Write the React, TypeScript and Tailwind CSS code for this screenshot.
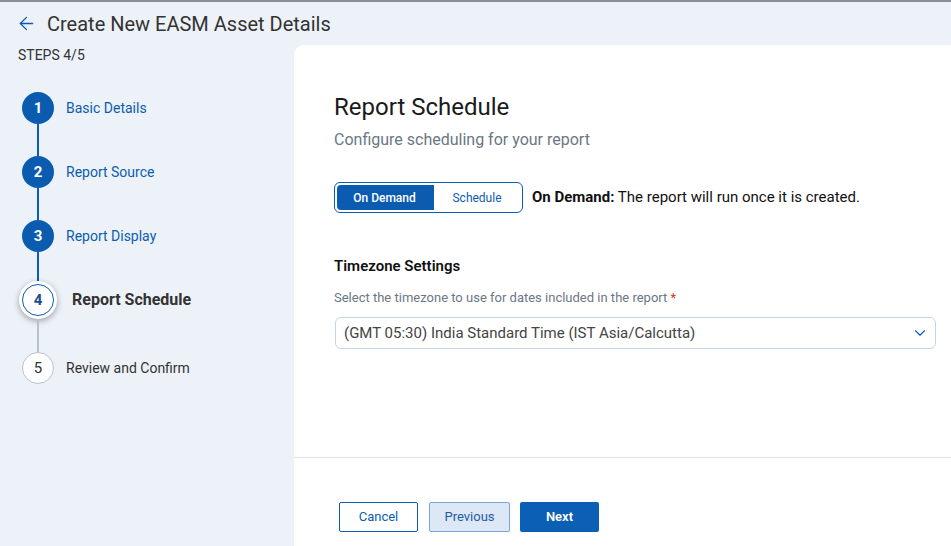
import { ArrowLeft, ChevronDown } from "lucide-react";

type Step = { n: number; label: string; state: "done" | "active" | "todo" };

const steps: Step[] = [
  { n: 1, label: "Basic Details", state: "done" },
  { n: 2, label: "Report Source", state: "done" },
  { n: 3, label: "Report Display", state: "done" },
  { n: 4, label: "Report Schedule", state: "active" },
  { n: 5, label: "Review and Confirm", state: "todo" },
];

function StepCircle({ step }: { step: Step }) {
  if (step.state === "active") {
    return (
      <div className="w-[38px] h-[38px] rounded-full bg-white shadow-[0_2px_6px_rgba(0,0,0,0.35)] flex items-center justify-center">
        <div className="w-[32px] h-[32px] rounded-full border border-[#0b5cb0] flex items-center justify-center text-[15px] font-bold text-[#1b4f8c]">
          {step.n}
        </div>
      </div>
    );
  }
  if (step.state === "done") {
    return (
      <div className="w-[32px] h-[32px] rounded-full bg-[#0b5cb0] flex items-center justify-center text-[15px] font-bold text-white">
        {step.n}
      </div>
    );
  }
  return (
    <div className="w-[32px] h-[32px] rounded-full bg-white border border-[#b8c2cc] flex items-center justify-center text-[15px] text-[#333]">
      {step.n}
    </div>
  );
}

function Stepper() {
  const lineHeights = [32, 32, 29, 33];
  return (
    <div className="flex flex-col mt-[29px]">
      {steps.map((s, i) => (
        <div key={s.n}>
          <div className={s.state === "active" ? "flex items-center h-[38px]" : "flex items-center h-[32px]"}>
            <div className="w-[76px] flex justify-center">
              <StepCircle step={s} />
            </div>
            {s.state === "active" ? (
              <span className="text-[16px] font-bold text-[#333] ml-[-4px]">{s.label}</span>
            ) : (
              <span
                className={
                  s.state === "done"
                    ? "text-[14px] text-[#0b5cb0] ml-[-10px]"
                    : "text-[14px] text-[#333] ml-[-10px]"
                }
              >
                {s.label}
              </span>
            )}
          </div>
          {i < steps.length - 1 && (
            <div className="w-[76px] flex justify-center">
              <div
                className={i < 3 ? "w-[2px] bg-[#0b5cb0]" : "w-[2px] bg-[#b8c2cc]"}
                style={{ height: lineHeights[i] }}
              />
            </div>
          )}
        </div>
      ))}
    </div>
  );
}

export default function App() {
  return (
    <div
      className="h-[546px] w-[951px] overflow-hidden flex flex-col bg-[#edf2f9] border-t-2 border-[#8d9196]"
      style={{ fontFamily: "Roboto, 'Liberation Sans', sans-serif" }}
    >
      {/* header */}
      <div className="h-[43px] flex items-center pl-[16px] gap-[10px]">
        <ArrowLeft className="w-[21px] h-[21px] text-[#0b5cb0]" strokeWidth={1.5} />
        <h1 className="text-[20px] text-[#333]">Create New EASM Asset Details</h1>
      </div>

      <div className="flex flex-1 min-h-0">
        {/* sidebar */}
        <div className="w-[294px] shrink-0">
          <div className="pl-[18px] pt-[2px] text-[14px] text-[#333] leading-[16px]">STEPS 4/5</div>
          <Stepper />
        </div>

        {/* main panel */}
        <div className="flex-1 bg-white rounded-tl-[10px] flex flex-col">
          <div className="h-[413px] border-b border-[#e1e5ea] pl-[40px] pr-[15px] pt-[48px]">
            <h2 className="text-[24px] text-[#1a1a1a] leading-[28px]">Report Schedule</h2>
            <p className="text-[16px] text-[#6b7785] mt-[9px] leading-[19px]">
              Configure scheduling for your report
            </p>

            <div className="flex items-center mt-[33px]">
              <div className="flex h-[31px] w-[189px] border border-[#0b5cb0] rounded-[6px] p-[2px]">
                <button className="w-[96px] bg-[#0b5cb0] text-white text-[12px] font-medium rounded-l-[4px] border-r border-[#0b5cb0]">
                  On Demand
                </button>
                <button className="flex-1 text-[#0b5cb0] text-[12px] border-l border-[#0b5cb0]">
                  Schedule
                </button>
              </div>
              <p className="ml-[9px] text-[15px] text-[#111]">
                <span className="font-bold">On Demand:</span> The report will run once it is created.
              </p>
            </div>

            <h3 className="mt-[44px] text-[15px] font-semibold text-[#111] leading-[18px]">
              Timezone Settings
            </h3>
            <p className="mt-[15px] text-[13px] text-[#6b7785] leading-[15px]">
              Select the timezone to use for dates included in the report{" "}
              <span className="text-[#d93025]">*</span>
            </p>
            <div className="mt-[12px] ml-[1px] h-[32px] border border-[#c4d6ec] rounded-[6px] flex items-center justify-between pl-[8px] pr-[6px]">
              <span className="text-[15px] text-[#444]">
                (GMT 05:30) India Standard Time (IST Asia/Calcutta)
              </span>
              <ChevronDown className="w-[18px] h-[18px] text-[#0b5cb0]" strokeWidth={1.5} />
            </div>
          </div>

          {/* footer */}
          <div className="flex items-start gap-[10px] pl-[45px] pt-[44px]">
            <button className="w-[79px] h-[30px] border border-[#0b5cb0] rounded-[2px] bg-white text-[13px] text-[#0b5cb0]">
              Cancel
            </button>
            <button className="ml-[1px] w-[81px] h-[30px] border border-[#7aa5d6] rounded-[2px] bg-[#dce8f5] text-[13px] text-[#1f5aa6]">
              Previous
            </button>
            <button className="w-[79px] h-[30px] rounded-[2px] bg-[#0b5fb4] text-[13px] font-semibold text-white">
              Next
            </button>
          </div>
        </div>
      </div>
    </div>
  );
}
